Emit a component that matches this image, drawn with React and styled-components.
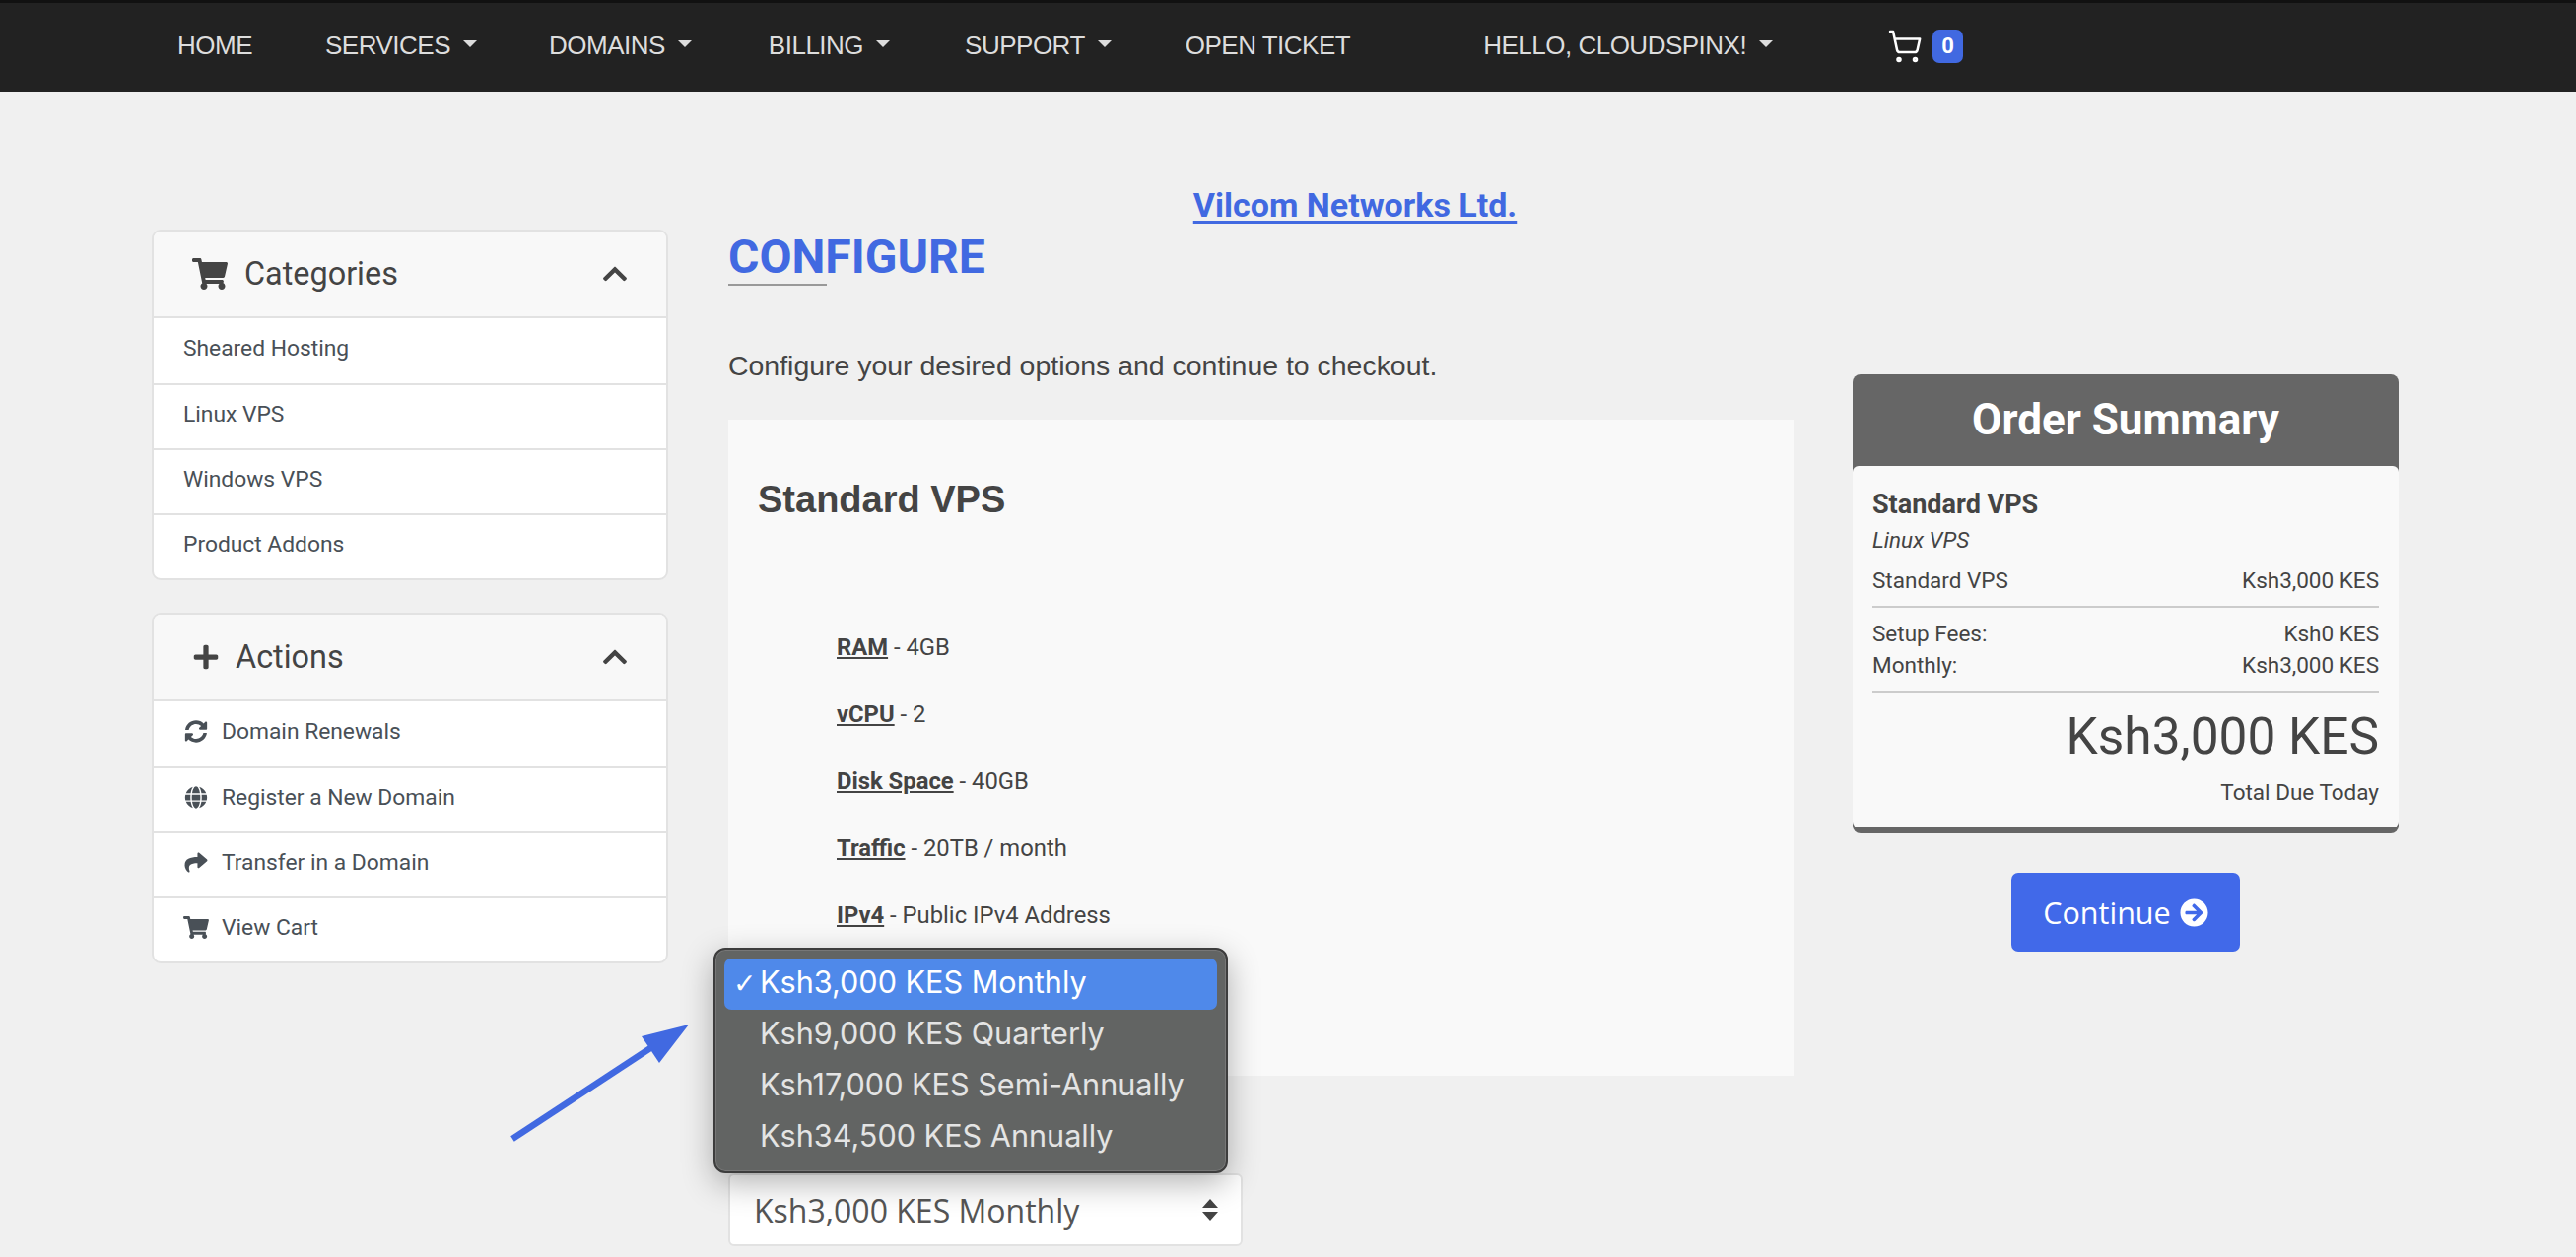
import React from "react";
import styled, { createGlobalStyle } from "styled-components";
import { FaShoppingCart, FaPlus, FaChevronUp, FaSyncAlt, FaGlobe, FaShare, FaArrowCircleRight } from "react-icons/fa";
import { ShoppingCart } from "lucide-react";

const Global = createGlobalStyle`
  html, body { margin: 0; padding: 0; background: #f0f0f0; height: 1276px; overflow: hidden; }
  * { box-sizing: border-box; }
  body { font-family: Roboto, "Liberation Sans", sans-serif; color: #444; }
`;

const Nav = styled.nav`
  height: 93px; background: #222; border-top: 3px solid #111;
  display: flex; align-items: center; padding: 0 0 3px 180px;
  font-family: "Liberation Sans", Arial, sans-serif; font-size: 26px; color: #ddd; letter-spacing: -0.5px;
`;
const NavItem = styled.a`
  display: flex; align-items: center; white-space: nowrap; margin-right: ${p => p.$gap ?? 73}px;
`;
const Caret = styled.span`
  width: 0; height: 0; margin: 0 0 4px 13px;
  border-left: 7px solid transparent; border-right: 7px solid transparent; border-top: 7px solid #ddd;
`;
const CartWrap = styled.span`display: flex; align-items: center; gap: 10px; color: #fff;`;
const Badge = styled.span`
  width: 31px; height: 34px; border-radius: 7px; background: #4169e1; color: #fff; letter-spacing: 0;
  display: flex; align-items: center; justify-content: center; font: 700 22px Roboto, sans-serif;
`;

const Page = styled.div`padding: 0 18px 0 154px;`;
const Company = styled.div`
  height: 140px; padding-top: 94px; text-align: center;
  font-size: 34px; font-weight: 700; line-height: 42px; color: #4169e1;
  a { color: inherit; text-decoration: underline; text-underline-offset: 4px; }
`;
const Columns = styled.div`display: flex; align-items: flex-start;`;
const Sidebar = styled.aside`width: 524px; margin-right: 61px; display: flex; flex-direction: column; gap: 33px;`;
const Card = styled.section`
  border: 2px solid #e2e2e2; border-radius: 9px; overflow: hidden; background: #fff;
`;
const CardHead = styled.header`
  height: 88px; background: #f8f8f8; display: flex; align-items: center;
  padding: 0 38px 0 39px; font-size: 32.4px; color: #444; border-bottom: 2px solid #e2e2e2;
  svg.lead { margin-right: ${p => p.$gap}px; }
  svg.chev { margin-left: auto; }
`;
const Row = styled.div`
  height: 66px; display: flex; align-items: center; padding: 0 0 5px 30px; font-size: 22.8px; color: #495057;
  border-top: ${p => (p.$first ? 0 : 2)}px solid #e2e2e2;
  svg { width: 26px; margin-right: 13px; font-size: 23px; flex: none; }
`;

const Main = styled.main`width: 1081px; margin-right: 60px; position: relative;`;
const Title = styled.h1`
  margin: 0; height: 55px; font-size: 48px; line-height: 56px; font-weight: 700; color: #4169e1;
`;
const Rule = styled.div`width: 100px; height: 2px; background: #999;`;
const Intro = styled.p`
  margin: 61px 0 35px; font: 28.45px/40px "Liberation Sans", Arial, sans-serif; color: #444;
`;
const Panel = styled.div`
  height: 666px; background: #f9f9f9; padding: 56px 30px 0;
  h2 { margin: 0 0 91px; font: 700 38px/50px "Liberation Sans", Arial, sans-serif; color: #444; }
`;
const Spec = styled.p`
  margin: 0 0 0 80px; height: 68px; line-height: 68px; font-size: 23.8px; color: #444;
  b { font-weight: 700; text-decoration: underline; }
`;
const SelectBox = styled.div`
  width: 522px; height: 74px; margin-top: 99px; background: #fff; border: 2px solid #e2e2e2; border-radius: 6px;
  display: flex; align-items: center; justify-content: space-between; padding: 0 22px 0 24px;
  font: 32px "Open Sans", sans-serif; color: #555;
`;
const Popup = styled.div`
  position: absolute; left: -15px; top: 729px; width: 522px; height: 229px; padding: 9px;
  background: #626463; border: 2px solid #3d3d3d; border-radius: 12px;
  box-shadow: inset 0 0 0 1px #777, 0 10px 32px rgba(0,0,0,.3);
  font: 30.6px Inter, sans-serif; color: #e4e4e4;
`;
const Option = styled.div`
  height: 52px; line-height: 48px; padding-left: 36px; border-radius: 7px; position: relative; white-space: nowrap;
  background: ${p => (p.$on ? "#4f89ea" : "transparent")}; color: ${p => (p.$on ? "#fff" : "#e4e4e4")};
`;
const Check = styled.span`position: absolute; left: 9px; top: 1px; font: 28px/50px "DejaVu Sans", sans-serif;`;
const Pointer = styled.svg`position: absolute; left: -239px; top: 795px; width: 200px; height: 135px;`;

const Summary = styled.aside`width: 554px; margin-top: 147px; display: flex; flex-direction: column; align-items: center;`;
const SumCard = styled.div`width: 100%; border-radius: 8px; background: #666; padding-bottom: 6px;`;
const SumHead = styled.h3`
  margin: 0; height: 93px; line-height: 92px; text-align: center; color: #fff; font-size: 44px; font-weight: 700;
`;
const SumBody = styled.div`
  background: #f9f9f9; border-radius: 6px; padding: 21px 20px 20px; color: #444; font-size: 22.5px;
`;
const SumName = styled.div`font-size: 27px; font-weight: 700; line-height: 36px;`;
const SumCat = styled.div`font-style: italic; line-height: 36px;`;
const SumRow = styled.div`display: flex; justify-content: space-between; line-height: 32px; margin-top: ${p => p.$top ?? 0}px;`;
const SumRule = styled.hr`border: 0; height: 2px; background: #ccc; margin: 10px 0;`;
const Total = styled.div`text-align: right; font-size: 51.4px; line-height: 80px; margin-top: -5px;`;
const Due = styled.div`text-align: right; line-height: 32px; margin-top: 0;`;
const Continue = styled.button`
  margin-top: 40px; width: 232px; height: 80px; border: 0; border-radius: 7px; background: #4169e9; color: #fff;
  font: 30.5px "Open Sans", sans-serif; display: flex; align-items: center; justify-content: center; gap: 9px;
`;

const Sort = () => (
  <svg width="18" height="24" viewBox="0 0 18 24" fill="#444"><path d="M9 1 17 10H1zM9 23 1 14H17z" /></svg>
);

export default function App() {
  return (
    <>
      <Global />
      <Nav>
        <NavItem $gap={74}>HOME</NavItem>
        <NavItem>SERVICES<Caret /></NavItem>
        <NavItem $gap={78}>DOMAINS<Caret /></NavItem>
        <NavItem $gap={76}>BILLING<Caret /></NavItem>
        <NavItem $gap={75}>SUPPORT<Caret /></NavItem>
        <NavItem $gap={135}>OPEN TICKET</NavItem>
        <NavItem $gap={116}>HELLO, CLOUDSPINX!<Caret /></NavItem>
        <CartWrap><ShoppingCart size={36} strokeWidth={1.7} /><Badge>0</Badge></CartWrap>
      </Nav>
      <Page>
        <Company><a>Vilcom Networks Ltd.</a></Company>
        <Columns>
          <Sidebar>
            <Card>
              <CardHead $gap={17}><FaShoppingCart className="lead" size={36} />Categories<FaChevronUp className="chev" size={28} /></CardHead>
              <Row $first>Sheared Hosting</Row>
              <Row>Linux VPS</Row>
              <Row>Windows VPS</Row>
              <Row>Product Addons</Row>
            </Card>
            <Card>
              <CardHead $gap={16}><FaPlus className="lead" size={28} />Actions<FaChevronUp className="chev" size={28} /></CardHead>
              <Row $first><FaSyncAlt />Domain Renewals</Row>
              <Row><FaGlobe />Register a New Domain</Row>
              <Row><FaShare />Transfer in a Domain</Row>
              <Row><FaShoppingCart />View Cart</Row>
            </Card>
          </Sidebar>
          <Main>
            <Title>CONFIGURE</Title>
            <Rule />
            <Intro>Configure your desired options and continue to checkout.</Intro>
            <Panel>
              <h2>Standard VPS</h2>
              <Spec><b>RAM</b> - 4GB</Spec>
              <Spec><b>vCPU</b> - 2</Spec>
              <Spec><b>Disk Space</b> - 40GB</Spec>
              <Spec><b>Traffic</b> - 20TB / month</Spec>
              <Spec><b>IPv4</b> - Public IPv4 Address</Spec>
            </Panel>
            <SelectBox>Ksh3,000 KES Monthly<Sort /></SelectBox>
            <Popup>
              <Option $on><Check>✓</Check>Ksh3,000 KES Monthly</Option>
              <Option>Ksh9,000 KES Quarterly</Option>
              <Option>Ksh17,000 KES Semi-Annually</Option>
              <Option>Ksh34,500 KES Annually</Option>
            </Popup>
            <Pointer viewBox="0 0 200 135">
              <line x1="20" y1="128" x2="160" y2="36" stroke="#4169e1" strokeWidth="6.5" />
              <polygon points="199,12 151,24 169,51" fill="#4169e1" />
            </Pointer>
          </Main>
          <Summary>
            <SumCard>
              <SumHead>Order Summary</SumHead>
              <SumBody>
                <SumName>Standard VPS</SumName>
                <SumCat>Linux VPS</SumCat>
                <SumRow $top={7}><span>Standard VPS</span><span>Ksh3,000 KES</span></SumRow>
                <SumRule />
                <SumRow><span>Setup Fees:</span><span>Ksh0 KES</span></SumRow>
                <SumRow><span>Monthly:</span><span>Ksh3,000 KES</span></SumRow>
                <SumRule />
                <Total>Ksh3,000 KES</Total>
                <Due>Total Due Today</Due>
              </SumBody>
            </SumCard>
            <Continue>Continue <FaArrowCircleRight size={29} /></Continue>
          </Summary>
        </Columns>
      </Page>
    </>
  );
}
